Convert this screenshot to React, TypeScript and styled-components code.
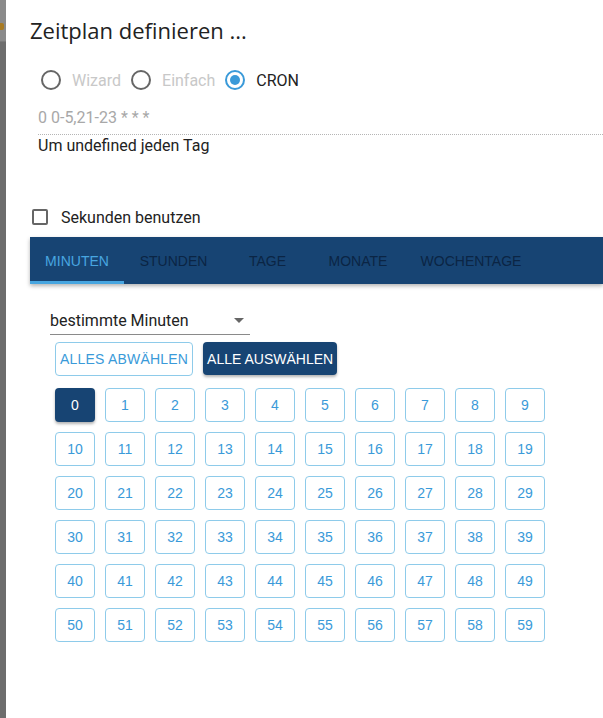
import * as React from 'react'
import styled, { createGlobalStyle } from 'styled-components'

const GlobalStyle = createGlobalStyle`
    html, body {
        margin: 0;
        padding: 0;
        background: #fff;
        font-family: Roboto, "Liberation Sans", Arial, sans-serif;
    }
`

const modes = ['Wizard', 'Einfach', 'CRON']
const tabs = [
    { label: 'MINUTEN', width: 94 },
    { label: 'STUNDEN', width: 99 },
    { label: 'TAGE', width: 89 },
    { label: 'MONATE', width: 92 },
    { label: 'WOCHENTAGE', width: 134 },
]
const minutes = Array.from({ length: 60 }, (_, i) => i)

const App = () => {
    const [mode, setMode] = React.useState('CRON')
    const [tab, setTab] = React.useState(0)
    const [selected, setSelected] = React.useState<number[]>([0])

    const toggle = (m: number) =>
        setSelected(s => (s.includes(m) ? s.filter(x => x !== m) : [...s, m]))

    return (
        <Page>
            <GlobalStyle />
            <Backdrop>
                <BackdropMark />
            </Backdrop>
            <Dialog>
                <Title>Zeitplan definieren ...</Title>
                <RadioRow>
                    {modes.map(m => (
                        <RadioLabel key={m} onClick={() => setMode(m)}>
                            <RadioCircle checked={mode === m} />
                            <RadioText disabled={m !== 'CRON'}>{m}</RadioText>
                        </RadioLabel>
                    ))}
                </RadioRow>
                <CronInput>0 0-5,21-23 * * *</CronInput>
                <Description>Um undefined jeden Tag</Description>
                <CheckRow>
                    <CheckBox />
                    <span>Sekunden benutzen</span>
                </CheckRow>
                <TabBar>
                    {tabs.map((t, i) => (
                        <Tab key={t.label} width={t.width} active={i === tab} onClick={() => setTab(i)}>
                            {t.label}
                        </Tab>
                    ))}
                </TabBar>
                <Panel>
                    <Select>
                        <span>bestimmte Minuten</span>
                        <Caret />
                    </Select>
                    <ButtonRow>
                        <OutlineButton onClick={() => setSelected([])}>ALLES ABWÄHLEN</OutlineButton>
                        <FilledButton onClick={() => setSelected(minutes)}>ALLE AUSWÄHLEN</FilledButton>
                    </ButtonRow>
                    <Grid>
                        {minutes.map(m => (
                            <MinuteButton key={m} active={selected.includes(m)} onClick={() => toggle(m)}>
                                {m}
                            </MinuteButton>
                        ))}
                    </Grid>
                </Panel>
            </Dialog>
        </Page>
    )
}

export default App

const Page = styled('div')`
    display: flex;
    width: 603px;
    height: 718px;
    overflow: hidden;
`

const Backdrop = styled('div')`
    width: 6px;
    flex: 0 0 6px;
    background: #6d6d6d;
    position: relative;
    overflow: hidden;
    &::before {
        content: '';
        display: block;
        height: 41px;
        background: #8a8a8a;
        border-bottom: 1px solid #7a7a7a;
    }
`

const BackdropMark = styled('span')`
    position: absolute;
    top: 23px;
    left: 0;
    width: 4px;
    height: 7px;
    border-radius: 0 2px 2px 0;
    background: #a87a22;
`

const Dialog = styled('div')`
    flex: 1;
    background: #fff;
    padding-top: 16px;
    overflow: hidden;
`

const Title = styled('div')`
    font-family: "Open Sans", Roboto, sans-serif;
    font-size: 22px;
    line-height: 28px;
    color: #222;
    margin-left: 24px;
`

const RadioRow = styled('div')`
    display: flex;
    align-items: center;
    margin: 23px 0 0 35px;
    height: 26px;
`

const RadioLabel = styled('label')`
    display: flex;
    align-items: center;
    margin-right: 10px;
    cursor: pointer;
`

const RadioCircle = styled('span')<{ checked: boolean }>`
    box-sizing: border-box;
    width: 20px;
    height: 20px;
    border-radius: 50%;
    border: 2px solid ${p => (p.checked ? '#3a9ad9' : '#666')};
    display: flex;
    align-items: center;
    justify-content: center;
    margin-right: 11px;
    &::after {
        content: '';
        width: 10px;
        height: 10px;
        border-radius: 50%;
        background: ${p => (p.checked ? '#3a9ad9' : 'transparent')};
    }
`

const RadioText = styled('span')<{ disabled: boolean }>`
    font-size: 16px;
    color: ${p => (p.disabled ? '#c8c8c8' : '#222')};
`

const CronInput = styled('div')`
    margin: 15px 0 0 32px;
    padding-bottom: 7px;
    font-size: 16px;
    line-height: 19px;
    color: #a8a8a8;
    border-bottom: 1px dotted #b5b5b5;
`

const Description = styled('div')`
    margin: 1px 0 0 32px;
    font-size: 16px;
    line-height: 20px;
    color: #222;
`

const CheckRow = styled('label')`
    display: flex;
    align-items: center;
    margin: 51px 0 0 26px;
    font-size: 16px;
    color: #222;
    height: 20px;
`

const CheckBox = styled('span')`
    box-sizing: border-box;
    width: 16px;
    height: 16px;
    border: 2px solid #666;
    border-radius: 2px;
    margin-right: 13px;
`

const TabBar = styled('div')`
    display: flex;
    margin: 10px 0 0 24px;
    height: 47px;
    background: #174473;
    box-shadow: 0 2px 4px rgba(0, 0, 0, 0.3);
`

const Tab = styled('div')<{ active: boolean; width: number }>`
    box-sizing: border-box;
    width: ${p => p.width}px;
    flex: 0 0 auto;
    display: flex;
    align-items: center;
    justify-content: center;
    font-family: "Liberation Sans", Arial, sans-serif;
    font-size: 14px;
    color: ${p => (p.active ? '#48a6e0' : '#0b2544')};
    border-bottom: 3px solid ${p => (p.active ? '#48a6e0' : 'transparent')};
    padding-top: 3px;
    cursor: pointer;
`

const Panel = styled('div')`
    padding: 23px 0 0 44px;
`

const Select = styled('div')`
    box-sizing: border-box;
    width: 200px;
    height: 28px;
    display: flex;
    align-items: center;
    justify-content: space-between;
    padding-right: 6px;
    font-size: 16px;
    color: #222;
    border-bottom: 1px solid #8a8a8a;
`

const Caret = styled('span')`
    width: 0;
    height: 0;
    border-left: 5px solid transparent;
    border-right: 5px solid transparent;
    border-top: 5px solid #666;
`

const ButtonRow = styled('div')`
    display: flex;
    gap: 10px;
    margin: 7px 0 0 5px;
`

const OutlineButton = styled('button')`
    box-sizing: border-box;
    height: 34px;
    padding: 0 4px;
    background: #fff;
    border: 1px solid #8ecbea;
    border-radius: 4px;
    color: #3a9ad9;
    font-family: "Liberation Sans", Arial, sans-serif;
    font-size: 14px;
    letter-spacing: 0.2px;
`

const FilledButton = styled('button')`
    box-sizing: border-box;
    height: 33px;
    padding: 0 4px;
    background: #174473;
    border: none;
    border-radius: 4px;
    color: #fff;
    font-family: "Liberation Sans", Arial, sans-serif;
    font-size: 14px;
    box-shadow: 0 2px 3px rgba(0, 0, 0, 0.3);
`

const Grid = styled('div')`
    display: grid;
    grid-template-columns: repeat(10, 40px);
    grid-auto-rows: 34px;
    column-gap: 10px;
    row-gap: 10px;
    margin: 12px 0 0 5px;
`

const MinuteButton = styled('button')<{ active: boolean }>`
    box-sizing: border-box;
    padding: 0;
    border-radius: 4px;
    font-family: "Liberation Sans", Arial, sans-serif;
    font-size: 14px;
    border: ${p => (p.active ? 'none' : '1px solid #8ecbea')};
    background: ${p => (p.active ? '#174473' : '#fff')};
    color: ${p => (p.active ? '#fff' : '#3a9ad9')};
    box-shadow: ${p => (p.active ? '0 2px 3px rgba(0, 0, 0, 0.3)' : 'none')};
    cursor: pointer;
`
